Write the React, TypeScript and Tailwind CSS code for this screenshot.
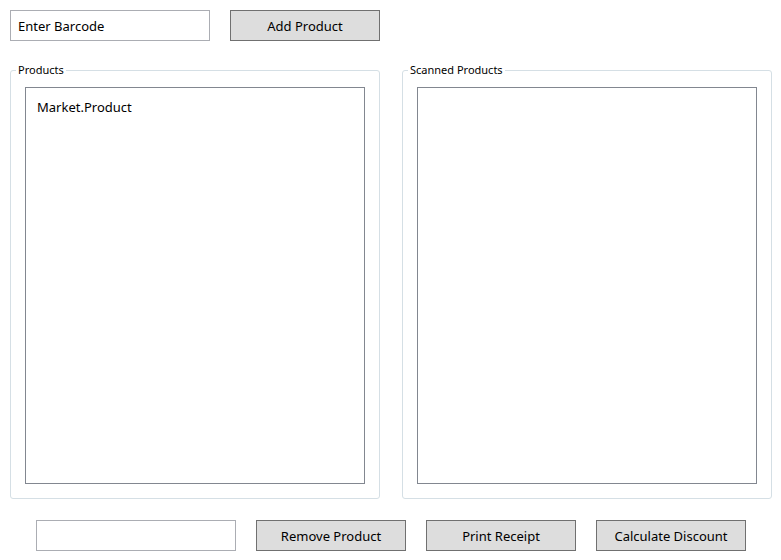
const font = "font-['Segoe_UI','Noto_Sans',sans-serif]";

type GroupProps = {
	title: string;
	items: string[];
};

function Group(props: GroupProps) {
	const { title, items } = props;

	return (
		<fieldset className="w-[370px] h-[436px] rounded-[3px] border border-[#d5dfe5] px-[14px] pb-[13px] pt-[10px]">
			<legend className="ml-[-9px] px-[2px] text-[11px] leading-[14px] text-black">{title}</legend>
			<ul className="h-[397px] w-[340px] border border-[#828790] bg-white px-[11px] py-[9px]">
				{items.map((item) => (
					<li key={item} className="text-[13px] leading-[20px] text-black">
						{item}
					</li>
				))}
			</ul>
		</fieldset>
	);
}

function Button({ label }: { label: string }) {
	return (
		<button className="h-[31px] w-[150px] border border-[#707070] bg-[#dddddd] pt-[2px] text-[13px] text-black">
			{label}
		</button>
	);
}

export default function App() {
	return (
		<div className={`h-[560px] w-[781px] bg-white p-[10px] ${font}`}>
			<div className="flex gap-[20px]">
				<input
					defaultValue="Enter Barcode"
					className="h-[31px] w-[200px] border border-[#abadb3] px-[7px] text-[13px] text-black outline-none"
				/>
				<Button label="Add Product" />
			</div>

			<div className="mt-[22px] flex gap-[22px]">
				<Group title="Products" items={["Market.Product"]} />
				<Group title="Scanned Products" items={[]} />
			</div>

			<div className="mt-[21px] flex gap-[20px] pl-[26px]">
				<input className="h-[31px] w-[200px] border border-[#abadb3] px-[7px] text-[13px] outline-none" />
				<Button label="Remove Product" />
				<Button label="Print Receipt" />
				<Button label="Calculate Discount" />
			</div>
		</div>
	);
}
